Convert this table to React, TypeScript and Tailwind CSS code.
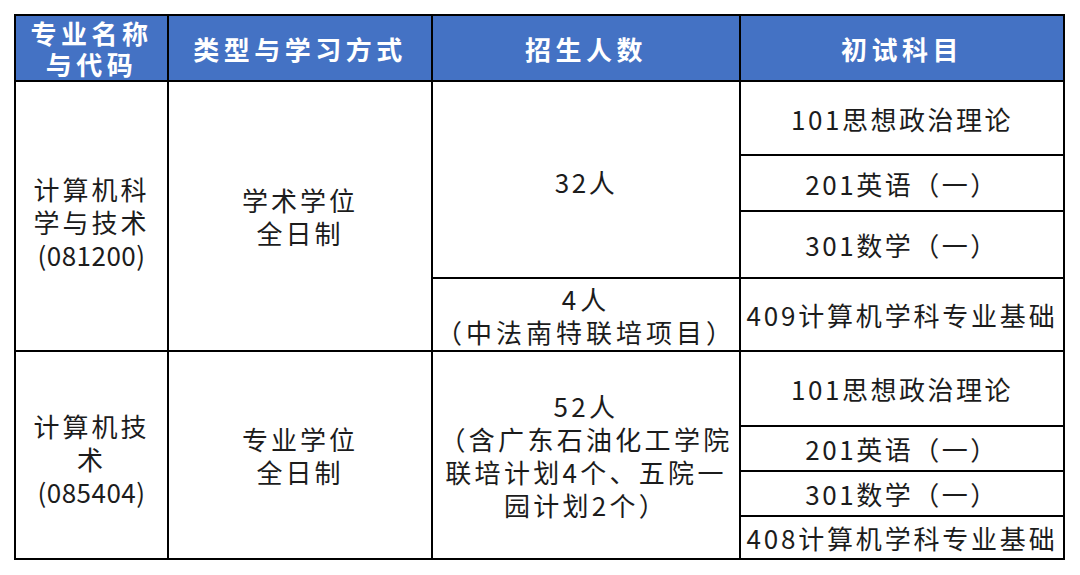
const font = { fontFamily: '"Noto Sans CJK SC", "Noto Sans", sans-serif' };

const Head = ({ lines }: { lines: string[] }) => (
  <div className="flex flex-col items-center justify-center bg-[#4472c4] text-[26px] font-semibold leading-[31px] tracking-[4.5px] text-white">
    {lines.map((l) => (
      <span key={l}>{l}</span>
    ))}
  </div>
);

const Cell = ({ lines, className = "" }: { lines: React.ReactNode[]; className?: string }) => (
  <div
    className={`flex flex-col items-center justify-center bg-white text-[26px] leading-[33px] tracking-[2.5px] text-[#1c1c1c] ${className}`}
  >
    {lines.map((l, i) => (
      <span key={i} className="whitespace-nowrap">
        {l}
      </span>
    ))}
  </div>
);

const Code = ({ children }: { children: string }) => <span className="tracking-[0.5px]">{children}</span>;

export default function App() {
  return (
    <div className="min-h-[575px] w-[1080px] bg-white pl-[14px] pt-[14px]" style={font}>
      <div className="grid w-[1051px] grid-cols-[151px_262px_306px_322px] grid-rows-[64px_72px_54px_65px_71px_73px_43px_43px_41px] gap-[2px] bg-black p-[2px]">
        <Head lines={["专业名称", "与代码"]} />
        <Head lines={["类型与学习方式"]} />
        <Head lines={["招生人数"]} />
        <Head lines={["初试科目"]} />

        <Cell
          className="row-span-4 pt-[10px] tracking-[3px]"
          lines={["计算机科", "学与技术", <Code key="c">(081200)</Code>]}
        />
        <Cell className="row-span-4 tracking-[3px]" lines={["学术学位", "全日制"]} />
        <Cell className="row-span-3 pt-[4px]" lines={["32人"]} />
        <Cell lines={["101思想政治理论"]} />
        <Cell lines={["201英语（一）"]} />
        <Cell lines={["301数学（一）"]} />
        <Cell className="tracking-[4px]" lines={["4人", "（中法南特联培项目）"]} />
        <Cell className="tracking-[2.8px]" lines={["409计算机学科专业基础"]} />

        <Cell
          className="row-span-4 pt-[6px] tracking-[3px]"
          lines={["计算机技", "术", <Code key="c">(085404)</Code>]}
        />
        <Cell className="row-span-4 tracking-[3px]" lines={["专业学位", "全日制"]} />
        <Cell
          className="row-span-4 tracking-[3.3px]"
          lines={["52人", "（含广东石油化工学院", "联培计划4个、五院一", "园计划2个）"]}
        />
        <Cell lines={["101思想政治理论"]} />
        <Cell lines={["201英语（一）"]} />
        <Cell lines={["301数学（一）"]} />
        <Cell className="tracking-[2.8px]" lines={["408计算机学科专业基础"]} />
      </div>
    </div>
  );
}
